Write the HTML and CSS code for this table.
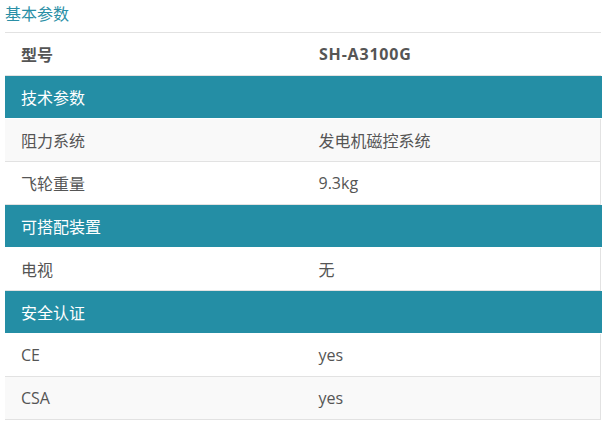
FILE: index.html
```html
<!DOCTYPE html>
<html lang="zh">
<head>
<meta charset="utf-8">
<link rel="stylesheet" href="styles.css">
</head>
<body>
<div class="page">
  <div class="caption">基本参数</div>
  <div class="spec">
    <div class="row head"><div class="cell">型号</div><div class="cell model">SH-A3100G</div></div>
    <div class="row group"><div class="cell">技术参数</div></div>
    <div class="row item odd"><div class="cell">阻力系统</div><div class="cell">发电机磁控系统</div></div>
    <div class="row item"><div class="cell">飞轮重量</div><div class="cell">9.3kg</div></div>
    <div class="row group"><div class="cell">可搭配装置</div></div>
    <div class="row item"><div class="cell">电视</div><div class="cell">无</div></div>
    <div class="row group"><div class="cell">安全认证</div></div>
    <div class="row item"><div class="cell">CE</div><div class="cell">yes</div></div>
    <div class="row item odd last"><div class="cell">CSA</div><div class="cell">yes</div></div>
  </div>
</div>
</body>
</html>
```
FILE: styles.css
```css
html, body {
  margin: 0;
  padding: 0;
  background: #fff;
}
body {
  font-family: "Open Sans", "Noto Sans CJK SC", sans-serif;
  font-size: 16px;
  color: #555;
}
.page {
  padding-left: 5px;
  width: 597px;
}
.caption {
  color: #2a8fa6;
  height: 32px;
  line-height: 28px;
  border-bottom: 1px solid #e2e2e2;
  width: 596px;
}
.spec {
  display: flex;
  flex-direction: column;
}
.row {
  display: flex;
  height: 42px;
  align-items: center;
  border-bottom: 1px solid #e2e2e2;
}
.row .cell {
  width: 298px;
  box-sizing: border-box;
  padding-left: 16px;
}
.head {
  width: 596px;
  font-weight: 700;
}
.model {
  letter-spacing: 0.8px;
}
.group {
  background: #248ea5;
  color: #fff;
  width: 597px;
  border-bottom-color: #fff;
}
.item {
  width: 595px;
  border-right: 1px solid #e2e2e2;
  background: #fff;
}
.item.odd {
  background: #f9f9f9;
}
```
